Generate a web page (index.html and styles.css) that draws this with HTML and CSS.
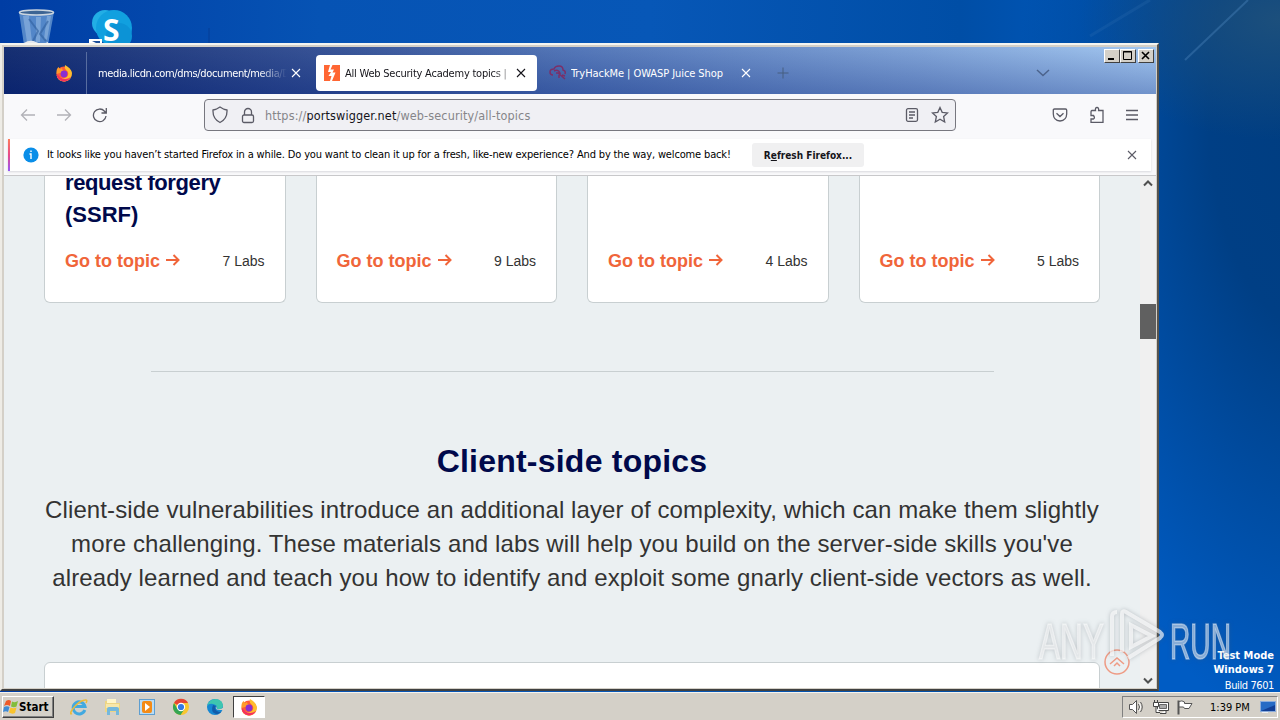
FILE: index.html
```html
<!DOCTYPE html>
<html lang="en">
<head>
    <meta charset="UTF-8">
    <meta name="viewport" content="width=device-width, initial-scale=1.0">
    <title>All Web Security Academy topics</title>
    <link rel="stylesheet" href="styles.css">
</head>
<body>
    <div class="desktop">
        <div class="wallpaper">
            <svg width="1280" height="692" viewBox="0 0 1280 692">
                <path d="M1248 0L1185 60" stroke="#4d86bd" stroke-width="2" opacity=".4"/>
                <path d="M1150 0L1090 36" stroke="#3a78b8" stroke-width="3" opacity=".2"/>
                <path d="M209 28v15" stroke="#06388c" opacity=".7"/>
            </svg>
        </div>

        <!-- desktop shortcuts -->
        <svg class="shortcut bin" width="38" height="36" viewBox="0 0 38 36">
            <path d="M1 3L6 36H30L36 3Z" fill="#6f9fd4" opacity=".75"/>
            <path d="M5 7L9 33H14L11 7ZM18 8V33H22L23 8ZM29 7L26 30L29 31L33 7Z" fill="#b5d0ee" opacity=".4"/>
            <path d="M11 10L20 22L15 32M30 12L22 25L28 32" fill="none" stroke="#2f5f9e" stroke-width="2" opacity=".6"/>
            <path d="M6 34Q12 30 18 33T30 33V36H6Z" fill="#e3e8ee"/>
            <ellipse cx="18.500" cy="3.500" rx="17" ry="2.500" fill="#3d6594" stroke="#cbd5df" stroke-width="1.600"/>
        </svg>
        <svg class="shortcut skype" width="46" height="36" viewBox="0 0 46 36">
            <circle cx="17" cy="14" r="13" fill="#22aee5"/>
            <circle cx="26" cy="19" r="18" fill="#11a0df"/>
            <circle cx="31" cy="27" r="13" fill="#0c93d6"/>
            <text x="15" y="32" class="skype-letter">S</text>
            <rect x="1" y="30" width="13" height="6" fill="#fff"/>
            <path d="M4 32H12V36Z" fill="#1b4f9a"/>
        </svg>

        <div class="build">
            <b>Test Mode</b>
            <b>Windows 7</b>
            <span>Build 7601</span>
        </div>

        <div class="window">
            <div class="titlebar">
                <div class="fx-view">
                    <svg width="18" height="18" viewBox="0 0 18 18">
                        <circle cx="9" cy="10" r="7.500" fill="#ff5a36"/>
                        <path d="M10 1Q16 4 17 9Q17 16 10 17.500Q3 18 1.500 11Q7 16 12 13Q15 9 11 6Q9 4 10 1Z" fill="#ffbd2e"/>
                        <path d="M1.500 10Q1 5 3.500 3L5 5L7 4Q7 6 9 7Q7 9 5 9Z" fill="#ff9b2a"/>
                        <path d="M1.500 10Q2 17 9 17.500Q14 17 16 13Q10 17 5 13Z" fill="#f4305f"/>
                        <circle cx="9" cy="10" r="3.400" fill="#8a2fd0"/>
                    </svg>
                </div>
                <div class="tab first">
                    <span class="tab-title">media.licdn.com/dms/document/media/D</span>
                    <svg class="x" width="10" height="10" viewBox="0 0 10 10"><path d="M1 1L9 9M9 1L1 9"/></svg>
                </div>
                <div class="tab active">
                    <svg class="favicon" width="16" height="16" viewBox="0 0 16 16">
                        <rect width="16" height="16" fill="#ff6633"/>
                        <path d="M6 0H8.500L6.500 4.500H10L8.500 7.500H11.500L8 16H6L7.500 11H4.500L7 7H4Z" fill="#fff"/>
                    </svg>
                    <span class="tab-title">All Web Security Academy topics |</span>
                    <svg class="x" width="10" height="10" viewBox="0 0 10 10"><path d="M1 1L9 9M9 1L1 9"/></svg>
                </div>
                <div class="tab third">
                    <svg class="favicon" width="18" height="16" viewBox="0 0 18 16">
                        <path d="M4 10Q1 10 1 7Q1 4 5 4Q6 1 10 1Q14 1 14 5Q17 6 16 9M5 6Q9 4 11 8H7M9 8L16 14M10 10V13M13 10L16 11" fill="none" stroke="#7c2f68" stroke-width="1.500"/>
                    </svg>
                    <span class="tab-title">TryHackMe | OWASP Juice Shop</span>
                    <svg class="x" width="10" height="10" viewBox="0 0 10 10"><path d="M1 1L9 9M9 1L1 9"/></svg>
                </div>
                <svg class="new-tab" width="12" height="12" viewBox="0 0 12 12"><path d="M6 0.500V11.500M0.500 6H11.500"/></svg>
                <svg class="all-tabs" width="14" height="8" viewBox="0 0 14 8"><path d="M1 1L7 6.500L13 1"/></svg>
                <div class="controls">
                    <span class="ctl"><svg width="14" height="12"><path d="M3 9H9" stroke="#000" stroke-width="2"/></svg></span>
                    <span class="ctl"><svg width="14" height="12"><path d="M2.500 1.500H10.500V9.500H2.500ZM2 2H11" fill="none" stroke="#000"/></svg></span>
                    <span class="ctl close"><svg width="14" height="12"><path d="M3 2L10 9M10 2L3 9" stroke="#000" stroke-width="1.600"/></svg></span>
                </div>
            </div>

            <div class="navbar">
                <svg class="back" width="16" height="16" viewBox="0 0 16 16"><path d="M15 8H1.500M7 2.500L1.500 8L7 13.500"/></svg>
                <svg class="forward" width="16" height="16" viewBox="0 0 16 16"><path d="M1 8H14.500M9 2.500L14.500 8L9 13.500"/></svg>
                <svg class="reload" width="16" height="16" viewBox="0 0 16 16"><path d="M14 9A6.300 6.300 0 1 1 12.500 4.200L14 6M14.300 1V6H9.500"/></svg>
                <div class="urlbar">
                    <svg class="shield" width="16" height="18" viewBox="0 0 16 18"><path d="M8 1Q11.500 3.500 15 4Q15.500 13 8 16.500Q.500 13 1 4Q4.500 3.500 8 1Z"/></svg>
                    <svg class="lock" width="14" height="17" viewBox="0 0 14 17"><rect x="1.500" y="8" width="11" height="7.500" rx="1.500"/><path d="M3.500 8V5A3.500 3.500 0 0 1 10.500 5V8"/></svg>
                    <span class="url">https://<em>portswigger.net</em>/web-security/all-topics</span>
                    <svg class="reader" width="14" height="16" viewBox="0 0 14 16"><rect x="1.500" y="1.700" width="11" height="12.600" rx="1.500"/><path d="M4 5H10M4 8H10M4 11H8"/></svg>
                    <svg class="star" width="18" height="18" viewBox="0 0 18 18"><path d="M9 1.500L11.200 6.300L16.500 6.900L12.600 10.500L13.700 16L9 13.200L4.300 16L5.400 10.500L1.500 6.900L6.800 6.300Z"/></svg>
                </div>
                <svg class="pocket" width="16" height="16" viewBox="0 0 16 16"><path d="M2.500 2H13.500Q14.700 2 14.700 3.200V7Q14.500 13.500 8 14Q1.500 13.500 1.300 7V3.200Q1.300 2 2.500 2ZM4.500 6.200L8 9.500L11.500 6.200"/></svg>
                <svg class="addon" width="16" height="18" viewBox="0 0 16 18"><path d="M2 6Q2 4.500 3 4.500H6.500Q6 1.500 8 1.500Q10 1.500 9.600 4.500H14V16.300H2V13H4.500Q6.300 12 4.500 9.500H2Z"/></svg>
                <svg class="menu" width="14" height="12" viewBox="0 0 14 12"><path d="M1 1.500H13M1 6H13M1 10.500H13"/></svg>
            </div>

            <div class="notice">
                <div class="notice-inner">
                    <svg class="info" width="16" height="16" viewBox="0 0 16 16"><circle cx="8" cy="8" r="7.600" fill="#0a8ee8"/><path d="M8 3.500V5M6.500 7H8V12" stroke="#fff" stroke-width="1.400" fill="none"/></svg>
                    <span class="notice-text">It looks like you haven’t started Firefox in a while. Do you want to clean it up for a fresh, like-new experience? And by the way, welcome back!</span>
                    <button class="refresh" type="button"><span>R<u>e</u>fresh Firefox...</span></button>
                    <svg class="x" width="10" height="10" viewBox="0 0 10 10"><path d="M1 1L9 9M9 1L1 9"/></svg>
                </div>
            </div>

            <div class="viewport">
                <div class="page">
                    <div class="cards">
                        <div class="card">
                            <h3><span class="tight">request forgery</span><br>(SSRF)</h3>
                            <div class="card-foot"><a>Go to topic</a><svg class="arrow" width="14" height="14" viewBox="0 0 14 14"><path d="M0 7H12M7.500 2L12.500 7L7.500 12"/></svg><span class="labs">7 Labs</span></div>
                        </div>
                        <div class="card">
                            <div class="card-foot"><a>Go to topic</a><svg class="arrow" width="14" height="14" viewBox="0 0 14 14"><path d="M0 7H12M7.500 2L12.500 7L7.500 12"/></svg><span class="labs">9 Labs</span></div>
                        </div>
                        <div class="card">
                            <div class="card-foot"><a>Go to topic</a><svg class="arrow" width="14" height="14" viewBox="0 0 14 14"><path d="M0 7H12M7.500 2L12.500 7L7.500 12"/></svg><span class="labs">4 Labs</span></div>
                        </div>
                        <div class="card">
                            <div class="card-foot"><a>Go to topic</a><svg class="arrow" width="14" height="14" viewBox="0 0 14 14"><path d="M0 7H12M7.500 2L12.500 7L7.500 12"/></svg><span class="labs">5 Labs</span></div>
                        </div>
                    </div>
                    <hr>
                    <h1>Client-side topics</h1>
                    <p>Client-side vulnerabilities introduce an additional layer of complexity, which can make them slightly<br>more challenging. These materials and labs will help you build on the server-side skills you've<br>already learned and teach you how to identify and exploit some gnarly client-side vectors as well.</p>
                    <div class="panel"></div>
                </div>
                <div class="scrollbar">
                    <svg width="10" height="7" viewBox="0 0 10 7"><path d="M1 5.500L5 1.500L9 5.500"/></svg>
                    <div class="thumb"></div>
                    <svg class="down" width="10" height="7" viewBox="0 0 10 7"><path d="M1 1.500L5 5.500L9 1.500"/></svg>
                </div>
            </div>
        </div>

        <!-- back to top button and watermark lie over the page -->
        <svg class="overlay" width="210" height="80" viewBox="0 0 210 80">
            <g fill="none" stroke="#ef8d72" stroke-width="1.500" opacity=".85">
                <circle cx="87" cy="61" r="12"/>
                <path d="M80 63L87 57L94 63M84 65L87 62L90 65"/>
            </g>
            <g class="mark">
                <text x="9" y="58" textLength="65" lengthAdjust="spacingAndGlyphs">ANY</text>
                <text x="140" y="58" textLength="61" lengthAdjust="spacingAndGlyphs">RUN</text>
                <path d="M82 55V16Q82 11 87 11M92 51V13Q92 9 96 11L130 31Q134 34 130 37L98 57M101 46V24L122 35Z"/>
            </g>
        </svg>
    </div>

    <div class="taskbar">
        <div class="start">
            <svg width="16" height="16" viewBox="0 0 16 16">
                <path d="M3 2Q6 0 8 2L7 7Q4 5 1 7Z" fill="#ee5a29"/>
                <path d="M9 2.500Q12 4 15 2L13.500 7.500Q11 9 8 7.500Z" fill="#82bd3c"/>
                <path d="M1 8Q4 6.500 6.500 8L5 13Q3 11.500 0 13Z" fill="#3f8bd5"/>
                <path d="M7.500 8.500Q10 10 13.500 8.500L12 14Q9 15.500 6 13.500Z" fill="#f9c32d"/>
            </svg>
            <span>Start</span>
        </div>
        <div class="launch">
            <svg width="18" height="18" viewBox="0 0 18 18">
                <path d="M14.800 12A6 6 0 1 1 15 8.500H5" fill="none" stroke="#42a9e0" stroke-width="3"/>
                <path d="M2 15.500Q-1 17 2 12Q8 3 15 2Q18 1.500 16 5" fill="none" stroke="#edbb38" stroke-width="1.500"/>
            </svg>
            <svg width="18" height="18" viewBox="0 0 18 18">
                <path d="M1 3H7L8 5H16V14H1Z" fill="#edd584"/>
                <path d="M3 1H12V5H3Z" fill="#fff6cb"/><path d="M2 6H15V10H2Z" fill="#f7e7aa"/>
                <path d="M3 17V11Q3 9 5 9H13Q15 9 15 11V17H12V13H6V17Z" fill="#75b8dc"/>
            </svg>
            <svg width="18" height="18" viewBox="0 0 18 18">
                <rect x="1.500" y="1.500" width="15" height="15" fill="#b9dcf5" stroke="#5e9ed0"/>
                <rect x="4" y="3" width="10" height="12" rx="2" fill="#f48b16"/>
                <path d="M7 5L12 9L7 13Z" fill="#fff"/>
            </svg>
            <svg width="18" height="18" viewBox="0 0 18 18">
                <circle cx="9" cy="9" r="8" fill="#f9c62f"/>
                <path d="M9 9L2 5A8 8 0 0 1 16 5H9Z" fill="#e54435"/>
                <path d="M2 5A8 8 0 0 0 8.500 17L12.500 11L9 12L5.500 11Z" fill="#34a553"/>
                <circle cx="9" cy="9" r="4.200" fill="#fff"/><circle cx="9" cy="9" r="3.100" fill="#3479e5"/>
            </svg>
            <svg width="18" height="18" viewBox="0 0 18 18">
                <circle cx="9" cy="9" r="8" fill="#1687d2"/>
                <path d="M1 8Q3 1 10 1Q17 2 17 8Q16 12 11 11Q12 7 7 6Q3 5 1 8Z" fill="#3ec6b0"/>
                <path d="M7 7Q4 14 10 16Q13 17 16 13Q14 15 11 13Q8 11 10 8Z" fill="#125ca9"/>
                <path d="M10 8Q9 12 13 12L17 12L18 8Q16 12 11 11Z" fill="#d4d0c8"/>
            </svg>
        </div>
        <div class="task-active">
            <svg width="18" height="18" viewBox="0 0 18 18">
                <circle cx="9" cy="10" r="7.500" fill="#ff5a36"/>
                <path d="M10 1Q16 4 17 9Q17 16 10 17.500Q3 18 1.500 11Q7 16 12 13Q15 9 11 6Q9 4 10 1Z" fill="#ffbd2e"/>
                <path d="M1.500 10Q1 5 3.500 3L5 5L7 4Q7 6 9 7Q7 9 5 9Z" fill="#ff9b2a"/>
                <path d="M1.500 10Q2 17 9 17.500Q14 17 16 13Q10 17 5 13Z" fill="#f4305f"/>
                <circle cx="9" cy="10" r="3.400" fill="#8a2fd0"/>
            </svg>
        </div>
        <div class="tray">
            <svg width="18" height="16" viewBox="0 0 18 16">
                <path d="M1.500 5.500H4.500L8.500 1.500V14.500L4.500 10.500H1.500Z" fill="#fff" stroke="#555"/>
                <path d="M10.500 5Q12.500 8 10.500 11M12.500 3Q16 8 12.500 13" fill="none" stroke="#555"/>
                <path d="M11.500 4Q14 8 11.500 12" fill="none" stroke="#fff"/>
            </svg>
            <svg width="18" height="16" viewBox="0 0 18 16">
                <path d="M5.500 3.500H16.500V11.500H5.500ZM8 14.500H14V11.500" fill="#fff" stroke="#444"/>
                <path d="M7.500 5.500H14.500V9.500H7.500Z" fill="#aaa" stroke="#666"/>
                <path d="M1.500 3.500H6.500V7.500H1.500ZM2.500 1V3M5.500 1V3M4 8V13.500H8" fill="#fff" stroke="#444"/>
            </svg>
            <svg width="18" height="16" viewBox="0 0 18 16">
                <path d="M2.500 1.500V15.500" stroke="#555" stroke-width="2"/>
                <path d="M3 2.500Q6 1 8.500 3V4.500H16L13 9.500H8.500L7.500 8H3Z" fill="#fff" stroke="#555"/>
            </svg>
            <span class="clock">1:39 PM</span>
            <svg class="show" width="16" height="14" viewBox="0 0 16 14"><rect x=".500" y="1.500" width="15" height="10" fill="#276bc5" stroke="#8cacdb"/><path d="M1 11L15 5V11Z" fill="#123f96"/><path d="M2 12.500H8" stroke="#eee"/></svg>
        </div>
    </div>
</body>
</html>
```
FILE: styles.css
```css
* {
    box-sizing: border-box;
}
body {
    margin: 0;
    width: 1280px;
    height: 720px;
    overflow: hidden;
    display: flex;
    flex-direction: column;
    font-family: "DejaVu Sans Condensed", "DejaVu Sans", sans-serif;
    font-size: 11px;
    color: #000;
}
svg {
    display: block;
    flex: none;
}
.desktop {
    position: relative;
    height: 692px;
    overflow: hidden;
}
.wallpaper {
    height: 692px;
    background:
        radial-gradient(ellipse 200px 120px at 1280px 20px, #1c4f7c 0, transparent 100%),
        radial-gradient(ellipse 290px 620px at 1310px 110px, #003d80 0, #003f85 35%, transparent 100%),
        linear-gradient(90deg, #003da4 0, #0653b4 320px, #0757b7 650px, #004ea6 960px, #005cc4 1160px);
}
.shortcut {
    position: absolute;
    top: 9px;
}
.bin {
    left: 18px;
}
.skype {
    left: 88px;
}
.skype-letter {
    font: bold 30px "Open Sans", sans-serif;
    fill: #fff;
}
.build {
    position: absolute;
    right: 6px;
    top: 649px;
    display: flex;
    flex-direction: column;
    align-items: flex-end;
    color: #fff;
    line-height: 15px;
    white-space: nowrap;
}
.build b {
    line-height: 14px;
}
.build span {
    padding-top: 1px;
    letter-spacing: -.4px;
}

/* browser window */
.window {
    position: absolute;
    left: 0;
    top: 43px;
    width: 1159px;
    height: 648px;
    display: flex;
    flex-direction: column;
    padding: 2px 1px 1px 2px;
    background: #d4d0c8;
    border-top: 2px solid #f4f4f0;
    border-left: 2px solid #eeece6;
    border-right: 2px solid #55534f;
    border-bottom: 2px solid #404040;
}
.titlebar {
    display: flex;
    align-items: center;
    height: 47px;
    padding-top: 5px;
    color: #fff;
    background: linear-gradient(180deg, rgba(255,255,255,.05), rgba(10,35,120,.3)), linear-gradient(90deg, #0a246a 0, #2e4b91 28%, #4d72b6 50%, #7ba0d6 80%, #9fc5f0 100%);
}
.fx-view {
    width: 83px;
    height: 43px;
    padding: 12px 0 0 51px;
    border-right: 1px solid #586da0;
}
.x {
    fill: none;
    stroke: currentColor;
    stroke-width: 1.1;
}
.tab {
    display: flex;
    align-items: center;
    height: 36px;
    border-radius: 4px;
    white-space: nowrap;
}
.tab-title {
    overflow: hidden;
    line-height: 16px;
    padding-top: 2px;
}
.first {
    width: 229px;
    padding-left: 11px;
}
.first .tab-title {
    width: 189px;
    margin-right: 4px;
    letter-spacing: -.36px;
    -webkit-mask-image: linear-gradient(90deg, #000 85%, transparent 100%);
    mask-image: linear-gradient(90deg, #000 85%, transparent 100%);
}
.active {
    width: 221px;
    padding-left: 8px;
    background: #fff;
    color: #15141a;
}
.active .tab-title {
    width: 163px;
    margin: 0 8px 0 5px;
    letter-spacing: -.22px;
    -webkit-mask-image: linear-gradient(90deg, #000 90%, #0006 100%);
    mask-image: linear-gradient(90deg, #000 90%, #0006 100%);
}
.third {
    width: 225px;
    padding-left: 12px;
}
.third .tab-title {
    width: 164px;
    margin: 0 6px 0 4px;
    letter-spacing: -.07px;
}
.new-tab {
    margin-left: 15px;
    fill: none;
    stroke: #465e80;
}
.all-tabs {
    margin-left: 247px;
    fill: none;
    stroke: #4c638c;
    stroke-width: 1.5;
}
.controls {
    display: flex;
    align-self: flex-start;
    margin: -3px 2px 0 auto;
}
.ctl {
    width: 16px;
    height: 14px;
    background: #d4d0c8;
    border: 1px solid;
    border-color: #fff #404040 #404040 #fff;
}
.close {
    margin-left: 2px;
}
.navbar {
    display: flex;
    align-items: center;
    height: 43px;
    padding-bottom: 1px;
    background: #f9f9fb;
}
.navbar svg {
    fill: none;
    stroke: #5b5b66;
    stroke-width: 1.3;
}
.navbar .back,
.navbar .forward {
    opacity: .45;
}
.back {
    margin-left: 16px;
}
.forward,
.reload {
    margin-left: 20px;
}
.urlbar {
    display: flex;
    align-items: center;
    width: 752px;
    height: 32px;
    margin-left: 96px;
    padding: 0 6px 0 7px;
    background: #f0f0f4;
    border: 1px solid #77777f;
    border-radius: 4px;
}
.lock {
    margin-left: 13px;
}
.url {
    margin: 1px auto 0 10px;
    font-size: 12.5px;
    line-height: 18px;
    letter-spacing: .14px;
    color: #858589;
}
.url em {
    color: #15141a;
    font-style: normal;
}
.star {
    margin-left: 12px;
}
.pocket {
    margin-left: 96px;
}
.addon {
    margin-left: 21px;
}
.menu {
    margin-left: 20px;
}
.notice {
    height: 39px;
    padding: 2px 5px 0 4px;
    background: #f9f9fb;
    border-bottom: 1px solid #c8c8ca;
}
.notice-inner {
    display: flex;
    align-items: center;
    height: 32px;
    padding-left: 13px;
    background: #fff;
    border-left: 2px solid;
    border-image: linear-gradient(180deg, #ff8058, #e84a88, #9059ff) 1;
    box-shadow: 0 1px 2px #d8d8dc;
}
.notice-text {
    width: 684px;
    margin: 0 21px 0 8px;
    line-height: 16px;
    letter-spacing: -.15px;
    white-space: nowrap;
}
.refresh {
    width: 112px;
    height: 24px;
    padding: 0;
    border: 0;
    border-radius: 3px;
    background: #f0f0f1;
    color: #15141a;
    font: bold 10px "DejaVu Sans Condensed", sans-serif;
    white-space: nowrap;
}
.notice-inner .x {
    margin-left: 263px;
    stroke: #5b5b66;
}

/* web page */
.viewport {
    display: flex;
    flex: 1;
    min-height: 0;
    overflow: hidden;
}
.page {
    width: 1136px;
    height: 512px;
    padding: 0 40px;
    overflow: hidden;
    background: #ebf0f2;
    color: #333332;
    font-family: "Liberation Sans", Arial, sans-serif;
}
.cards {
    display: grid;
    grid-template-columns: repeat(4, 1fr);
    gap: 30px;
    height: 127px;
}
.card {
    display: flex;
    flex-direction: column;
    justify-content: flex-end;
    height: 127px;
    padding: 0 20px 30px;
    background: #fff;
    border: 1px solid #c8cfd1;
    border-top: 0;
    border-radius: 0 0 6px 6px;
}
.card h3 {
    margin: -10px 0 19px;
    font-size: 22px;
    line-height: 32px;
    color: #00094b;
}
.tight {
    letter-spacing: -.4px;
}
.card-foot {
    display: flex;
    align-items: center;
    height: 22px;
    white-space: nowrap;
}
.card-foot a {
    width: 95px;
    color: #f0653a;
    font-size: 18px;
    font-weight: bold;
}
.arrow {
    margin: -2px 0 0 6px;
    fill: none;
    stroke: #f0653a;
    stroke-width: 2;
}
.labs {
    margin-left: auto;
    font-size: 14px;
}
.page hr {
    width: 843px;
    height: 1px;
    margin: 68px auto 0;
    border: 0;
    background: #c8cfd1;
}
.page h1 {
    margin: 69px 0 0;
    font-size: 32px;
    line-height: 40px;
    letter-spacing: .22px;
    text-align: center;
    color: #00094b;
}
.page p {
    margin: 12px -10px 0;
    font-size: 24px;
    line-height: 34px;
    letter-spacing: .11px;
    text-align: center;
    white-space: nowrap;
}
.panel {
    height: 60px;
    margin-top: 67px;
    background: #fff;
    border: 1px solid #c8cfd1;
    border-radius: 6px;
}
.scrollbar {
    display: flex;
    flex-direction: column;
    align-items: center;
    width: 16px;
    height: 512px;
    padding: 4px 0;
    background: #f0f0f0;
}
.scrollbar svg {
    fill: none;
    stroke: #505050;
    stroke-width: 2;
}
.thumb {
    width: 16px;
    height: 35px;
    margin-top: 117px;
    background: #606060;
}
.down {
    margin-top: auto;
}
.overlay {
    position: absolute;
    left: 1030px;
    top: 601px;
}
.mark {
    fill: #fff;
    fill-opacity: .5;
    filter: drop-shadow(0 0 2px rgba(80, 90, 100, .5));
}
.mark text {
    font: 50px "Liberation Sans", sans-serif;
    stroke: #fff;
    stroke-opacity: .4;
    stroke-width: 1.5;
}
.mark path {
    fill: none;
    stroke: #fff;
    stroke-opacity: .65;
    stroke-width: 4;
}

/* taskbar */
.taskbar {
    display: flex;
    align-items: center;
    height: 28px;
    padding: 1px 2px 0;
    background: #d4d0c8;
    border-top: 1px solid #f4f3ef;
}
.start {
    display: flex;
    align-items: center;
    width: 52px;
    height: 22px;
    border: 1px solid;
    border-color: #fff #404040 #404040 #fff;
    box-shadow: inset -1px -1px #808080;
    font-size: 11.5px;
    font-weight: bold;
}
.launch {
    display: flex;
    gap: 16px;
    margin-left: 16px;
}
.task-active {
    width: 32px;
    height: 22px;
    margin-left: 9px;
    padding: 1px 0 0 6px;
    background: #fff;
    border: 1px solid;
    border-color: #404040 #fff #fff #404040;
}
.tray {
    display: flex;
    align-items: center;
    gap: 6px;
    width: 156px;
    height: 22px;
    margin-left: auto;
    padding-left: 5px;
    border: 1px solid;
    border-color: #808080 #fff #fff #808080;
}
.clock {
    width: 40px;
    margin-left: 10px;
    white-space: nowrap;
}
.show {
    margin-left: 4px;
}
```
